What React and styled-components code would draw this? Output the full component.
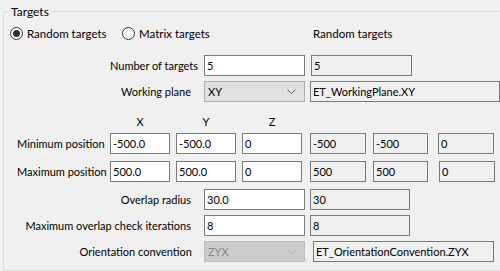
import React from "react";
import styled, { createGlobalStyle } from "styled-components";

const GlobalStyle = createGlobalStyle`
  html, body {
    margin: 0;
    padding: 0;
    background: #f0f0f0;
    overflow: hidden;
  }
  body {
    width: 500px;
    height: 271px;
    font-family: Lato, "Noto Sans", sans-serif;
    font-size: 11px;
    color: #000;
  }
`;

const GroupBox = styled.fieldset`
  margin: 4px 0 0 3px;
  padding: 0 0 8px 0;
  width: 520px;
  border: 1px solid #dcdcdc;
  box-sizing: border-box;
  min-width: 0;

  legend {
    margin-left: 5px;
    padding: 0 2px;
    line-height: 15px;
    font-size: 12px;
  }
`;

const Body = styled.div`
  display: flex;
  flex-direction: column;
  margin-top: -7px;
`;

const RadioRow = styled.div`
  display: flex;
  align-items: center;
  height: 16px;
  margin-top: 13px;
  padding-left: 6px;
  font-size: 11.5px;
`;

const RadioOption = styled.label`
  display: flex;
  align-items: center;
  gap: 4px;
  width: ${(p) => p.$width}px;
  flex-shrink: 0;
  white-space: nowrap;
`;

const RadioCircle = styled.span`
  width: 13px;
  height: 13px;
  box-sizing: border-box;
  border: 1px solid #333;
  border-radius: 50%;
  background: #fff;
  display: flex;
  align-items: center;
  justify-content: center;

  &::after {
    content: "";
    width: 7px;
    height: 7px;
    border-radius: 50%;
    background: ${(p) => (p.$checked ? "#333" : "transparent")};
  }
`;

const SideLabel = styled.span`
  margin-left: 81px;
`;

const Row = styled.div`
  display: flex;
  align-items: center;
  height: 21px;
  margin-top: ${(p) => p.$top}px;
`;

const RightLabel = styled.span`
  width: ${(p) => p.$w}px;
  flex-shrink: 0;
  text-align: right;
  margin-right: ${(p) => 200 - p.$w}px;
  white-space: nowrap;
`;

const LeftLabel = styled.span`
  width: 93px;
  flex-shrink: 0;
  padding-left: 13px;
  white-space: nowrap;
`;

const Field = styled.div`
  width: ${(p) => p.$w}px;
  height: 21px;
  flex-shrink: 0;
  box-sizing: border-box;
  margin-left: ${(p) => p.$gap || 0}px;
  border: 1px solid #7a7a7a;
  background: ${(p) => (p.$readOnly ? "transparent" : "#fff")};
  padding-left: 2px;
  display: flex;
  align-items: center;
  white-space: nowrap;
  overflow: hidden;
`;

const Combo = styled.div`
  width: 101px;
  height: 21px;
  flex-shrink: 0;
  box-sizing: border-box;
  border: 1px solid ${(p) => (p.$disabled ? "#bfbfbf" : "#adadad")};
  background: ${(p) => (p.$disabled ? "#cccccc" : "#e1e1e1")};
  color: ${(p) => (p.$disabled ? "#838383" : "#000")};
  padding: 0 8px 0 3px;
  display: flex;
  align-items: center;
  justify-content: space-between;

  svg {
    display: block;
  }
`;

const Header = styled.div`
  display: flex;
  height: 16px;
  margin-top: 13px;
  padding-left: 106px;
`;

const HeaderCell = styled.span`
  width: 60px;
  margin-right: 6px;
  text-align: center;
`;

const Chevron = ({ color }) => (
  <svg width="9" height="5" viewBox="0 0 9 5">
    <path d="M0.5 0.5 L4.5 4.5 L8.5 0.5" fill="none" stroke={color} strokeWidth="1" />
  </svg>
);

const FormRow = ({ label, labelEnd = 187, top, children }) => (
  <Row $top={top}>
    <RightLabel $w={labelEnd}>{label}</RightLabel>
    {children}
  </Row>
);

const PositionRow = ({ label, top, values, readOnly, last }) => (
  <Row $top={top}>
    <LeftLabel>{label}</LeftLabel>
    {values.map((v, i) => (
      <Field key={i} $w={60} $gap={i ? 6 : 0}>
        {v}
      </Field>
    ))}
    <Field $readOnly $w={56} $gap={8}>{readOnly[0]}</Field>
    <Field $readOnly $w={55} $gap={7}>{readOnly[1]}</Field>
    <Field $readOnly $w={56} $gap={last}>{readOnly[2]}</Field>
  </Row>
);

export default function App() {
  return (
    <>
      <GlobalStyle />
      <GroupBox>
        <legend>Targets</legend>
        <Body>
          <RadioRow>
            <RadioOption $width={112}>
              <RadioCircle $checked />
              Random targets
            </RadioOption>
            <RadioOption $width={110}>
              <RadioCircle />
              Matrix targets
            </RadioOption>
            <SideLabel>Random targets</SideLabel>
          </RadioRow>

          <FormRow label="Number of targets" labelEnd={194} top={14}>
            <Field $w={101}>5</Field>
            <Field $readOnly $w={101} $gap={6}>5</Field>
          </FormRow>

          <FormRow label="Working plane" top={5}>
            <Combo>
              XY
              <Chevron color="#606060" />
            </Combo>
            <Field $readOnly $w={190} $gap={5}>ET_WorkingPlane.XY</Field>
          </FormRow>

          <Header>
            <HeaderCell>X</HeaderCell>
            <HeaderCell>Y</HeaderCell>
            <HeaderCell>Z</HeaderCell>
          </Header>

          <PositionRow
            label="Minimum position"
            top={2}
            values={["-500.0", "-500.0", "0"]}
            readOnly={["-500", "-500", "0"]}
            last={10}
          />
          <PositionRow
            label="Maximum position"
            top={7}
            values={["500.0", "500.0", "0"]}
            readOnly={["500", "500", "0"]}
            last={11}
          />

          <FormRow label="Overlap radius" top={7}>
            <Field $w={101}>30.0</Field>
            <Field $readOnly $w={100} $gap={5}>30</Field>
          </FormRow>

          <FormRow label="Maximum overlap check iterations" top={5}>
            <Field $w={101}>8</Field>
            <Field $readOnly $w={100} $gap={5}>8</Field>
          </FormRow>

          <FormRow label="Orientation convention" labelEnd={188} top={5}>
            <Combo $disabled>
              ZYX
              <Chevron color="#b0b0b0" />
            </Combo>
            <Field $readOnly $w={181} $gap={8}>ET_OrientationConvention.ZYX</Field>
          </FormRow>
        </Body>
      </GroupBox>
    </>
  );
}
